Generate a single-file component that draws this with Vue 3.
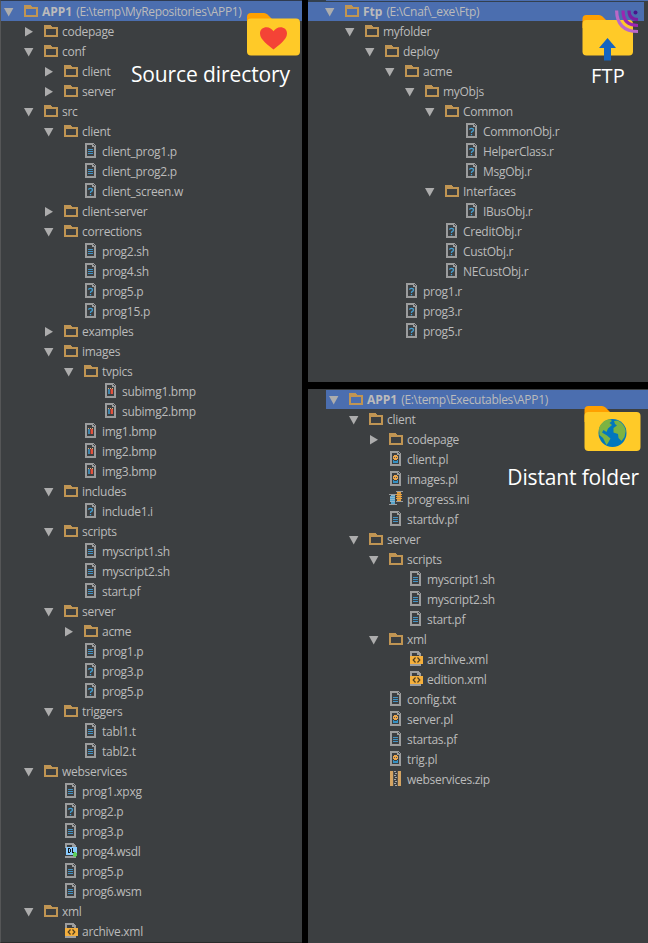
<script setup>
import { h } from 'vue'

// Each line: depth, kind, name, and for roots the path. "dir+" is a collapsed folder.
const parse = (text) =>
  text.trim().split('\n').map((line) => {
    const [depth, kind, name, path] = line.trim().split('|')
    return {
      depth: Number(depth),
      kind: kind.startsWith('dir') ? 'dir' : kind,
      arrow: kind === 'dir' ? 'open' : kind === 'dir+' ? 'closed' : '',
      name,
      path,
    }
  })

const source = parse(String.raw`
0|dir|APP1|(E:\temp\MyRepositories\APP1)
1|dir+|codepage
1|dir|conf
2|dir+|client
2|dir+|server
1|dir|src
2|dir|client
3|txt|client_prog1.p
3|txt|client_prog2.p
3|unk|client_screen.w
2|dir+|client-server
2|dir|corrections
3|txt|prog2.sh
3|txt|prog4.sh
3|unk|prog5.p
3|unk|prog15.p
2|dir+|examples
2|dir|images
3|dir|tvpics
4|img|subimg1.bmp
4|img|subimg2.bmp
3|img|img1.bmp
3|img|img2.bmp
3|img|img3.bmp
2|dir|includes
3|unk|include1.i
2|dir|scripts
3|txt|myscript1.sh
3|txt|myscript2.sh
3|txt|start.pf
2|dir|server
3|dir+|acme
3|txt|prog1.p
3|unk|prog3.p
3|unk|prog5.p
2|dir|triggers
3|txt|tabl1.t
3|txt|tabl2.t
1|dir|webservices
2|txt|prog1.xpxg
2|unk|prog2.p
2|txt|prog3.p
2|wsdl|prog4.wsdl
2|txt|prog5.p
2|txt|prog6.wsm
1|dir|xml
2|xml|archive.xml`)

const ftp = parse(String.raw`
0|dir|Ftp|(E:\Cnaf\_exe\Ftp)
1|dir|myfolder
2|dir|deploy
3|dir|acme
4|dir|myObjs
5|dir|Common
6|unk|CommonObj.r
6|unk|HelperClass.r
6|unk|MsgObj.r
5|dir|Interfaces
6|unk|IBusObj.r
5|unk|CreditObj.r
5|unk|CustObj.r
5|unk|NECustObj.r
3|unk|prog1.r
3|unk|prog3.r
3|unk|prog5.r`)

const distant = parse(String.raw`
0|dir|APP1|(E:\temp\Executables\APP1)
1|dir|client
2|dir+|codepage
2|pl|client.pl
2|pl|images.pl
2|ini|progress.ini
2|txt|startdv.pf
1|dir|server
2|dir|scripts
3|txt|myscript1.sh
3|txt|myscript2.sh
3|txt|start.pf
2|dir|xml
3|xml|archive.xml
3|xml|edition.xml
2|txt|config.txt
2|pl|server.pl
2|txt|startas.pf
2|pl|trig.pl
2|zip|webservices.zip`)

// Icon artwork: [fill, path, fill-rule] layers on a 16x20 grid.
const G = '#9c9d9e'
const sheet = [G, 'M1 2H10V3H11V4H12V17H1ZM3 4V15H10V6H8V4Z', 'evenodd']
const fold = ['#45484a', 'M9 3H10V4H11V5H10V4H9Z']
const half = [G, 'M1 2H10V3H11V4H12V7H10V6H8V4H3V7H1ZM1 15H12V17H1Z']
const art = {
  dir: [['#c09553', 'M0 4H6L8 6H14V16H0ZM2 8V14H12V8Z', 'evenodd']],
  txt: [sheet, fold, ['#4493c4', 'M4 8H9V9H4ZM4 10H9V11H4ZM4 12H9V13H4Z']],
  unk: [sheet, fold],
  img: [sheet, fold,
    ['#3f86ae', 'M4 8H6V13H4Z'], ['#e0533e', 'M7 8H9V13H7Z'], ['#7d3b39', 'M6 8H7V13H6Z'],
    ['#e8b07c', 'M4 7H5V8H4ZM6 7H7V8H6ZM8 7H9V8H8Z']],
  pl: [sheet, fold,
    ['#f0a54a', 'M5 6H8V7H9V10H8V11H5V10H4V7H5Z'], ['#3592c4', 'M4 11H5V12H8V11H9V14H4Z'],
    ['#3c5c70', 'M5 8H6V9H5ZM7 8H8V9H7Z']],
  xml: [half, ['#f4af3d', 'M1 7H14V15H1Z']],
  wsdl: [half, ['#8accff', 'M2 6H13V14H2Z'], ['#151515', 'M4 7H6V8H7V11H6V12H4ZM5 8V11H6V8ZM8 7H9V11H11V12H8Z', 'evenodd'],
    ['#5fd05f', 'M9 12H10V11H12V12H13V15H12V16H10V15H9Z']],
  ini: [
    ['#9a9c9d', 'M0 5H7V6H0ZM0 15H8V16H0ZM7 2H14V3H7ZM7 12H14V13H7Z'],
    ['#55a3cc', 'M1 7H6V8H1ZM1 9H6V10H1ZM1 11H6V12H1ZM2 13H6V15H2Z'],
    ['#8fb6ca', 'M2 6H6V7H2ZM1 8H6V9H1ZM1 10H6V11H1ZM1 12H6V13H1Z'],
    ['#f0a33a', 'M8 3H12V4H8ZM7 5H13V6H7ZM7 7H13V8H7ZM7 9H13V10H7ZM8 11H12V12H8Z'],
    ['#c2924c', 'M8 4H12V5H8ZM8 6H12V7H8ZM8 8H12V9H8ZM8 10H12V11H8Z']],
  zip: [
    ['#d3a463', 'M1 2H4V17H1ZM9 2H12V17H9Z'],
    ['#a5a6a7', 'M5 2H7V3H5ZM6 4H8V5H6ZM5 6H7V7H5ZM6 8H8V9H6ZM5 10H7V11H5ZM6 12H8V13H6ZM5 14H7V15H5ZM6 16H8V17H6Z'],
    ['#55524d', 'M4 2H5V17H4ZM8 2H9V17H8Z']],
}
// Thin antialiased marks drawn above the pixel layers.
const marks = {
  unk: ['#459fd2', 1.3, 'M4.500 8.800Q4.600 7.300 6.500 7.300Q8.500 7.300 8.500 8.900Q8.500 9.900 7.300 10.400Q6.500 10.800 6.500 12M6.500 13V14.200'],
  xml: ['#4d3d20', 1.2, 'M6.500 8.500L4.200 11L6.500 13.500M8.500 8.500L10.800 11L8.500 13.500'],
}

const Icon = ({ kind }) =>
  h('svg', { viewBox: '0 0 16 20', width: 16, height: 20, 'shape-rendering': 'crispEdges' }, [
    ...art[kind].map(([fill, d, rule]) => h('path', { fill, d, 'fill-rule': rule || 'nonzero' })),
    marks[kind] &&
      h('path', {
        d: marks[kind][2], fill: 'none', stroke: marks[kind][0],
        'stroke-width': marks[kind][1], 'shape-rendering': 'auto',
      }),
  ])
Icon.props = ['kind']

const panes = [
  { id: 'source', title: 'Source directory', rows: source },
  { id: 'ftp', title: 'FTP', rows: ftp },
  { id: 'distant', title: 'Distant folder', rows: distant },
]
</script>

<template>
  <main class="board">
    <section v-for="pane in panes" :key="pane.id" class="pane" :class="pane.id">
      <div class="tree">
        <div v-for="(row, i) in pane.rows" :key="i" class="row" :class="{ root: i === 0 }">
          <span class="indent" :style="{ width: row.depth * 20 + 'px' }"></span>
          <span class="arrow">
            <svg v-if="row.arrow" width="10" height="20" viewBox="0 0 10 20">
              <path v-if="row.arrow === 'open'" d="M0 7H9.4L4.7 15.4Z" fill="#adadad" />
              <path v-else d="M1 6V15.4L9 10.7Z" fill="#adadad" />
            </svg>
          </span>
          <span class="icon"><Icon :kind="row.kind" /></span>
          <span class="label"><b v-if="row.path">{{ row.name }}</b><template v-else>{{ row.name }}</template><span v-if="row.path" class="path">{{ row.path }}</span></span>
        </div>
      </div>
      <div class="badge">
        <svg v-if="pane.id === 'source'" class="emblem" width="54" height="44" viewBox="0 0 54 44">
          <path d="M0 16V4Q0 0 4 0H17Q19 0 20.500 1.500L25 6V16Z" fill="#ffa000" />
          <rect y="5.500" width="53" height="37" rx="4" fill="#ffca28" />
          <path d="M26.500 36.500C22 32.500 13 27 13 20.500C13 16.500 16 14.300 19.500 14.300C22.500 14.300 25 16 26.500 18.300C28 16 30.500 14.300 33.500 14.300C37 14.300 40 16.500 40 20.500C40 27 31 32.500 26.500 36.500Z" fill="#f44336" />
        </svg>
        <svg v-else-if="pane.id === 'ftp'" class="emblem" width="60" height="54" viewBox="0 0 60 54">
          <path d="M0.500 18V9Q0.500 5 4.500 5H17Q19 5 20.500 6.500L24 10V18Z" fill="#ffa000" />
          <rect x="0.500" y="10" width="50.500" height="35.500" rx="4" fill="#ffca28" />
          <path d="M25.500 28L34 38H29V50.500H22V38H17Z" fill="#1565c0" />
          <circle cx="53.500" cy="2.500" r="2" fill="#4a148c" />
          <g fill="none" stroke-width="3.200">
            <path d="M47 0.500Q47 9.500 56 9.500" stroke="#7b1fa2" />
            <path d="M41 0.500Q41 15.500 56 15.500" stroke="#9c27b0" />
            <path d="M34.600 0.500Q35 21.500 56 21.500" stroke="#ba68c8" />
          </g>
        </svg>
        <svg v-else class="emblem" width="57" height="46" viewBox="0 0 57 46">
          <path d="M0.500 16V4Q0.500 0 4.500 0H18Q20 0 21.500 1.500L26 6V16Z" fill="#ffa000" />
          <rect x="0.500" y="6" width="56" height="39" rx="4" fill="#ffca28" />
          <circle cx="28.500" cy="27" r="14" fill="#0277bd" />
          <path d="M15 22C17 17 21 13.500 26 13.200L28 15L25.500 17L28 19L24 22.500L22.500 26L19.500 24L18 26.500L23 29.500L26.500 32.500L24 37L22.500 39L19 32L15.500 29Z" fill="#7cb342" />
          <path d="M30 15L34 14.500C38 17 41 20 41.700 25L40.500 31L37.500 35L34.500 32L34 28L29.500 26.500L29.500 22L33 19.500L31 18Z" fill="#7cb342" />
        </svg>
        <h2 class="title">{{ pane.title }}</h2>
      </div>
    </section>
  </main>
</template>

<style>
body {
  margin: 0;
  background: #000;
}
</style>

<style scoped>
.board {
  display: grid;
  grid-template-columns: 302px 340px;
  grid-template-rows: 382px 554px;
  gap: 7px 6px;
  width: 648px;
  height: 943px;
  background: #000;
  font-family: 'Open Sans', 'Noto Sans', sans-serif;
}
.pane {
  position: relative;
  overflow: hidden;
  box-sizing: border-box;
  background: #3c3f41;
  color: #bbbbbb;
}
.source {
  grid-row: 1 / 3;
  border-top: 1px solid #2f3b50;
  border-left: 1px solid #555657;
  border-bottom: 1px solid #2b2b2b;
}
.ftp {
  padding-top: 1px;
  background: linear-gradient(90deg, #33404f 18px, #4b6eaf 18px) 0 0 / 100% 1px no-repeat #3c3f41;
}
.row {
  display: flex;
  height: 20px;
  line-height: 20px;
  white-space: pre;
}
.root {
  background: #4b6eaf;
}
.source .row {
  padding-left: 3px;
}
.ftp .row {
  padding-left: 17px;
}
.ftp .root {
  margin-right: 4px;
  background: linear-gradient(#33404f 1px, #4b6eaf 1px);
}
.distant .row {
  padding-left: 3px;
}
.distant .root {
  background: linear-gradient(#3c3f41 1px, #4b6eaf 1px);
}
.distant .tree {
  margin-left: 18px;
}
.indent {
  flex: none;
}
.arrow {
  flex: none;
  width: 20px;
}
.icon {
  flex: none;
  width: 18px;
}
svg {
  display: block;
}
.label {
  padding-top: 1px;
  font-size: 12px;
  letter-spacing: -0.28px;
}
.label b {
  letter-spacing: 0;
}
.path {
  margin-left: 4px;
  letter-spacing: -0.32px;
}
.badge {
  position: absolute;
  display: flex;
  flex-direction: column;
}
.source .badge {
  top: 12px;
  right: 1px;
  align-items: flex-end;
}
.ftp .badge {
  top: 10px;
  right: 6px;
  align-items: flex-start;
}
.distant .badge {
  top: 17px;
  right: 7px;
  align-items: flex-end;
}
.title {
  margin: 0;
  color: #fff;
  font-size: 21px;
  font-weight: 400;
  line-height: 28px;
  letter-spacing: -0.1px;
  white-space: nowrap;
}
.source .title {
  margin: 3px 11px 0 0;
}
.ftp .title {
  margin: -2px 0 0 9px;
  font-size: 20px;
  letter-spacing: 0.2px;
}
.distant .title {
  margin: 11px 2px 0 0;
  letter-spacing: -0.15px;
}
</style>
